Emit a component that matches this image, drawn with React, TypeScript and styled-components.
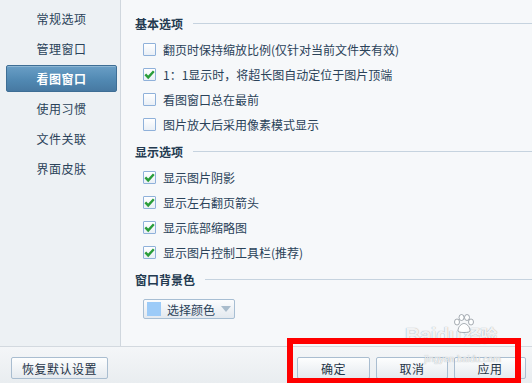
import styled, { createGlobalStyle } from "styled-components";

const GlobalStyle = createGlobalStyle`
    html, body {
        margin: 0;
        padding: 0;
        background: #f6f8fa;
    }
    * {
        box-sizing: border-box;
    }
`;

const Window = styled.div`
    position: relative;
    width: 532px;
    height: 383px;
    display: flex;
    flex-direction: column;
    overflow: hidden;
    font-family: "Noto Sans CJK SC", "Noto Sans", sans-serif;
    font-size: 12px;
    color: #2a4259;
`;

const Main = styled.div`
    display: flex;
    height: 347px;
    border-bottom: 1px solid #d3d9df;
`;

const Sidebar = styled.div`
    width: 121px;
    background: #edf1f4;
    border-right: 1px solid #d0d7de;
    padding-top: 5px;
    display: flex;
    flex-direction: column;
    gap: 3px;
`;

const NavItem = styled.div<{ $active?: boolean }>`
    height: 27px;
    margin: 0 3px 0 6px;
    display: flex;
    align-items: center;
    justify-content: center;
    letter-spacing: 0.5px;
    border-radius: 2px;
    color: ${(p) => (p.$active ? "#ffffff" : "#2a4259")};
    font-weight: ${(p) => (p.$active ? "bold" : "normal")};
    border: 1px solid ${(p) => (p.$active ? "#3e6e95" : "transparent")};
    background: ${(p) =>
        p.$active ? "linear-gradient(#6a9fc6, #5189b3 55%, #4779a2)" : "transparent"};
    box-shadow: ${(p) => (p.$active ? "inset 0 1px 0 rgba(255,255,255,0.25)" : "none")};
`;

const Content = styled.div`
    flex: 1;
    background: #f6f8fa;
    padding: 14px 0 0 14px;
    display: flex;
    flex-direction: column;
`;

const Section = styled.div`
    display: flex;
    flex-direction: column;
    & + & {
        margin-top: 5px;
    }
`;

const Heading = styled.div`
    height: 18px;
    display: flex;
    align-items: center;
    gap: 10px;
    font-weight: bold;
    color: #233a50;
    margin-bottom: 5px;
    &::after {
        content: "";
        flex: 1;
        height: 1px;
        background: #c6d3df;
    }
`;

const Row = styled.label`
    height: 25px;
    display: flex;
    align-items: center;
    padding-left: 8px;
    gap: 7px;
`;

const Box = styled.span`
    width: 13px;
    height: 13px;
    border: 1px solid #8fb1da;
    border-radius: 1px;
    background: linear-gradient(#ffffff, #e9eff6);
    display: flex;
    align-items: center;
    justify-content: center;
`;

const Picker = styled.div`
    margin: 6px 0 0 8px;
    width: 92px;
    height: 20px;
    border: 1px solid #a7bed3;
    border-radius: 2px;
    background: linear-gradient(#fbfcfd, #e3e9ef);
    display: flex;
    align-items: center;
    padding-left: 3px;
    gap: 6px;
`;

const Swatch = styled.span`
    width: 14px;
    height: 14px;
    background: #9ccbf8;
`;

const Footer = styled.div`
    flex: 1;
    background: linear-gradient(#f4f6f8, #e9edf0);
    display: flex;
    justify-content: space-between;
    padding: 10px 6px 0 11px;
`;

const Group = styled.div`
    display: flex;
    gap: 6px;
`;

const Button = styled.button<{ $w: number }>`
    width: ${(p) => p.$w}px;
    height: 22px;
    border: 1px solid #a9bdd0;
    border-radius: 2px;
    background: linear-gradient(#fdfefe, #e5eaef);
    font-family: inherit;
    font-size: 12px;
    color: #1f3447;
    padding: 0;
    letter-spacing: 0.5px;
`;

const Watermark = styled.div`
    position: absolute;
    left: 405px;
    top: 322px;
    color: rgba(255, 255, 255, 0.9);
    text-shadow: 0 0 1px rgba(110, 120, 130, 0.8);
    font-family: "Liberation Sans", sans-serif;
    pointer-events: none;
    display: flex;
    flex-direction: column;
    align-items: flex-end;
`;

const Paw = styled.svg`
    position: absolute;
    left: 48px;
    top: -8px;
`;

const MarkTitle = styled.div`
    font-size: 21px;
    font-weight: bold;
    letter-spacing: -0.5px;
    line-height: 26px;
    span {
        font-family: "Noto Sans CJK SC", sans-serif;
        font-size: 17px;
        margin-left: 3px;
    }
`;

const MarkUrl = styled.div`
    font-size: 9.5px;
    margin-top: 5px;
    margin-right: -4px;
`;

const RedFrame = styled.div`
    position: absolute;
    left: 287px;
    top: 338px;
    width: 234px;
    height: 46px;
    border: 6px solid #ff0000;
`;

const Check = () => (
    <svg width="11" height="11" viewBox="0 0 11 11">
        <path d="M1.3 5.4 L4.2 8.4 L9.8 2.3" fill="none" stroke="#2a9d3a" strokeWidth="2.4" />
    </svg>
);

const nav = ["常规选项", "管理窗口", "看图窗口", "使用习惯", "文件关联", "界面皮肤"];

const basic = [
    { text: "翻页时保持缩放比例(仅针对当前文件夹有效)", on: false },
    { text: "1：1显示时，将超长图自动定位于图片顶端", on: true },
    { text: "看图窗口总在最前", on: false },
    { text: "图片放大后采用像素模式显示", on: false },
];

const display = [
    { text: "显示图片阴影", on: true },
    { text: "显示左右翻页箭头", on: true },
    { text: "显示底部缩略图", on: true },
    { text: "显示图片控制工具栏(推荐)", on: true },
];

export default function App() {
    return (
        <>
            <GlobalStyle />
            <Window>
                <Main>
                    <Sidebar>
                        {nav.map((n) => (
                            <NavItem key={n} $active={n === "看图窗口"}>{n}</NavItem>
                        ))}
                    </Sidebar>
                    <Content>
                        <Section>
                            <Heading>基本选项</Heading>
                            {basic.map((o) => (
                                <Row key={o.text}>
                                    <Box>{o.on && <Check />}</Box>
                                    {o.text}
                                </Row>
                            ))}
                        </Section>
                        <Section>
                            <Heading>显示选项</Heading>
                            {display.map((o) => (
                                <Row key={o.text}>
                                    <Box>{o.on && <Check />}</Box>
                                    {o.text}
                                </Row>
                            ))}
                        </Section>
                        <Section>
                            <Heading>窗口背景色</Heading>
                            <Picker>
                                <Swatch />
                                选择颜色
                                <svg width="10" height="6" viewBox="0 0 10 6">
                                    <path d="M0 0 H10 L5 6 Z" fill="#a9bccc" />
                                </svg>
                            </Picker>
                        </Section>
                    </Content>
                </Main>
                <Footer>
                    <Button $w={97}>恢复默认设置</Button>
                    <Group>
                        <Button $w={73}>确定</Button>
                        <Button $w={72}>取消</Button>
                        <Button $w={72}>应用</Button>
                    </Group>
                </Footer>
                <Watermark>
                    <Paw width="22" height="20" viewBox="0 0 22 20">
                        <g fill="rgba(255,255,255,0.9)" stroke="rgba(110,120,130,0.6)" strokeWidth="1">
                            <ellipse cx="4" cy="8" rx="2.5" ry="3" />
                            <ellipse cx="8.5" cy="3.5" rx="2.5" ry="3" />
                            <ellipse cx="14" cy="3.5" rx="2.5" ry="3" />
                            <ellipse cx="18" cy="8" rx="2.5" ry="3" />
                            <path d="M5 17 C5 12 9 9.5 11 9.5 C13 9.5 17 12 17 17 C17 19 5 19 5 17 Z" />
                        </g>
                    </Paw>
                    <MarkTitle>Baidu<span>经验</span></MarkTitle>
                    <MarkUrl>jingyan.baidu.com</MarkUrl>
                </Watermark>
                <RedFrame />
            </Window>
        </>
    );
}
